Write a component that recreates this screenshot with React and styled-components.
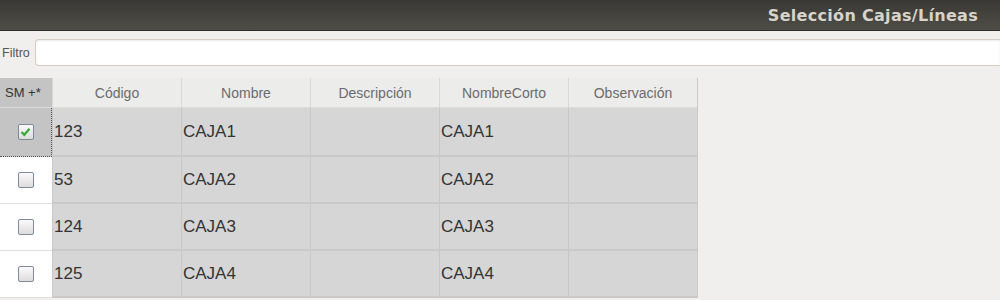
import React from 'react'
import styled, { createGlobalStyle } from 'styled-components'

const Global = createGlobalStyle`
  html, body {
    margin: 0;
    padding: 0;
    background: #f0efed;
    font-family: "Liberation Sans", Arial, sans-serif;
  }
`

const Page = styled.div`
  width: 1000px;
  height: 300px;
  overflow: hidden;
  background: #f0efed;
`

const TitleBar = styled.div`
  height: 31px;
  box-sizing: border-box;
  background: linear-gradient(#393834, #4f4d47);
  border-bottom: 1px solid #2e2d2a;
  display: flex;
  align-items: center;
  justify-content: flex-end;
  padding-right: 22px;
`

const Title = styled.h1`
  margin: 0;
  font-family: "DejaVu Sans", sans-serif;
  font-size: 16px;
  font-weight: bold;
  color: #d8d4cb;
  letter-spacing: 0.3px;
`

const FilterRow = styled.div`
  display: flex;
  align-items: center;
  padding: 8px 0 0 2px;
  height: 27px;
`

const Label = styled.label`
  font-size: 12.5px;
  color: #555;
  margin-right: 5px;
`

const Input = styled.input`
  flex: 1;
  height: 27px;
  box-sizing: border-box;
  border: 1px solid #d7cdc1;
  border-right: none;
  border-radius: 4px 0 0 4px;
  background: #fff;
  box-shadow: inset 0 1px 2px rgba(0, 0, 0, 0.08);
  outline: none;
`

const Table = styled.div`
  margin-top: 12px;
  width: 697px;
  display: grid;
  grid-template-columns: 52px repeat(5, 129px);
  border-right: 1px solid #c9c9c9;
`

const Head = styled.div`
  height: 30px;
  box-sizing: border-box;
  display: flex;
  align-items: center;
  font-size: ${p => (p.$sm ? '13px' : '14px')};
  color: ${p => (p.$sm ? '#333' : '#6b6b6b')};
  background: ${p => (p.$sm ? '#c4c4c4' : '#ececeb')};
  border-left: ${p => (p.$sm ? 'none' : '1px solid #d8d8d6')};
  border-bottom: 1px solid #dcdcdc;
  justify-content: ${p => (p.$sm ? 'flex-start' : 'center')};
  padding-left: ${p => (p.$sm ? '5px' : '0')};
`

const Cell = styled.div`
  height: ${p => (p.$first ? '49px' : '47px')};
  box-sizing: border-box;
  display: flex;
  align-items: center;
  font-size: 17px;
  color: #333;
  background: #d6d6d6;
  border-left: 1px solid #c8c8c8;
  border-bottom: 2px solid #c9c9c9;
  padding-left: 1px;
`

const SelCell = styled.div`
  height: ${p => (p.$first ? '49px' : '47px')};
  box-sizing: border-box;
  display: flex;
  align-items: center;
  justify-content: center;
  background: ${p => (p.$active ? '#c4c4c4' : '#ffffff')};
  border-bottom: ${p => (p.$active ? '1px dotted #555' : '1px solid #dedede')};
  border-right: ${p => (p.$active ? '1px dotted #555' : 'none')};
`

const Box = styled.span`
  width: 16px;
  height: 16px;
  box-sizing: border-box;
  border: 1.5px solid #7e8c9a;
  border-radius: 2px;
  background: linear-gradient(#fafafa, #dcdcdc);
  display: flex;
  align-items: center;
  justify-content: center;
`

const rows = [
  ['123', 'CAJA1', '', 'CAJA1', ''],
  ['53', 'CAJA2', '', 'CAJA2', ''],
  ['124', 'CAJA3', '', 'CAJA3', ''],
  ['125', 'CAJA4', '', 'CAJA4', ''],
]

const headers = ['Código', 'Nombre', 'Descripción', 'NombreCorto', 'Observación']

const App = () => {
  return (
    <Page>
      <Global />
      <TitleBar>
        <Title>Selección Cajas/Líneas</Title>
      </TitleBar>
      <FilterRow>
        <Label>Filtro</Label>
        <Input />
      </FilterRow>
      <Table>
        <Head $sm>SM +*</Head>
        {headers.map(h => (
          <Head key={h}>{h}</Head>
        ))}
        {rows.map((r, i) => (
          <React.Fragment key={i}>
            <SelCell $active={i === 0} $first={i === 0}>
              <Box>
                {i === 0 && (
                  <svg width="11" height="10" viewBox="0 0 11 10">
                    <path d="M1.5 5 L4.3 7.8 L9.5 1.8" fill="none" stroke="#3aa83a" strokeWidth="2.2" />
                  </svg>
                )}
              </Box>
            </SelCell>
            {r.map((c, j) => (
              <Cell key={j} $first={i === 0}>{c}</Cell>
            ))}
          </React.Fragment>
        ))}
      </Table>
    </Page>
  )
}

export default App
